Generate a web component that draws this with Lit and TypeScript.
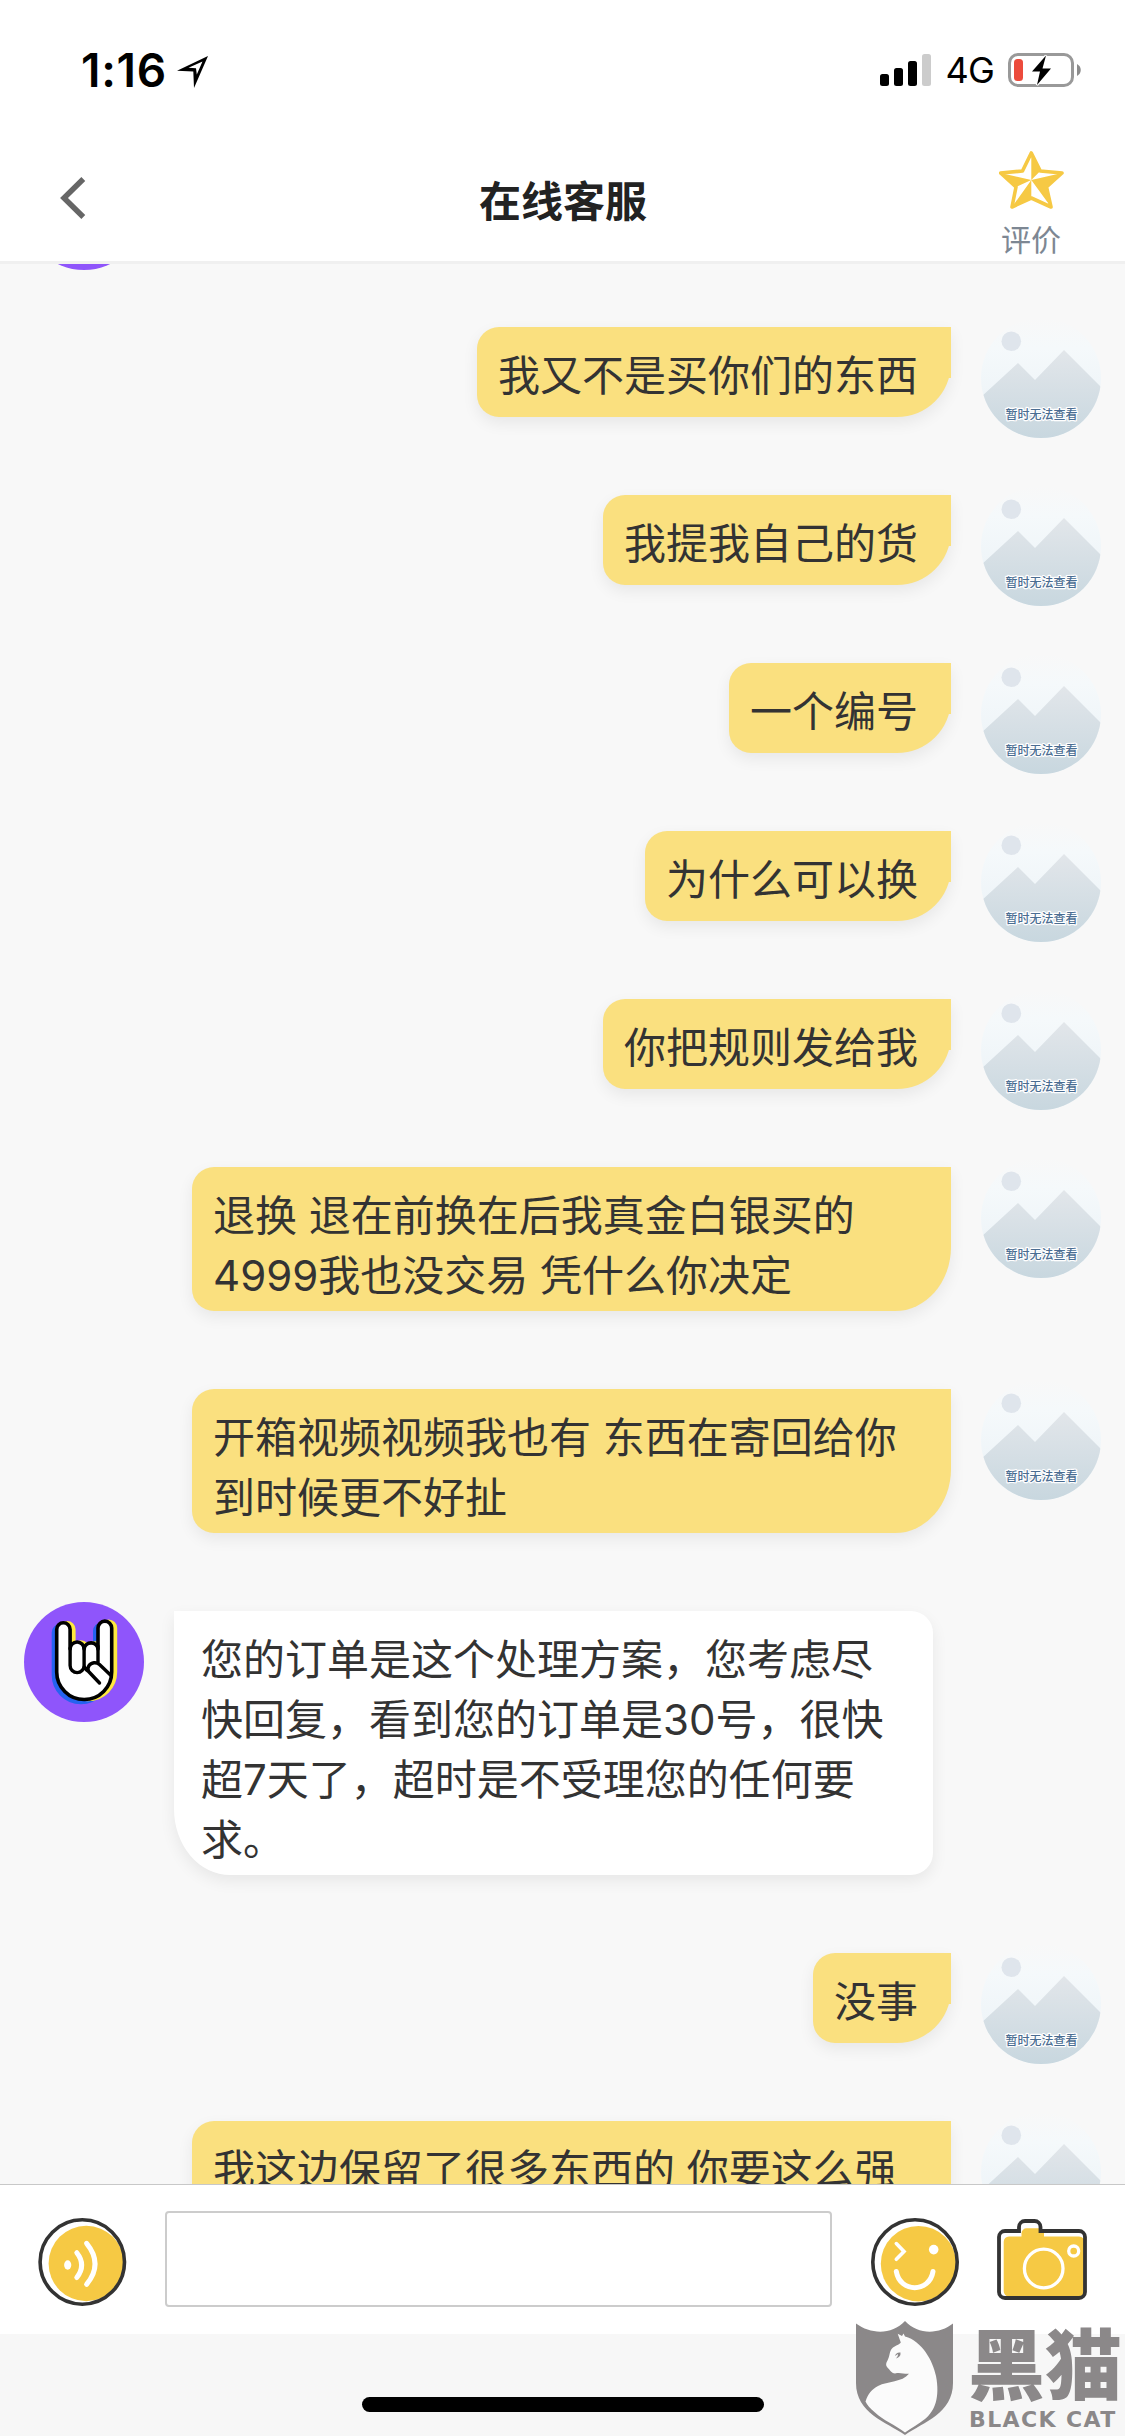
import { LitElement, html, css, svg } from "lit";
import { customElement, property } from "lit/decorators.js";

interface Message {
  side: "me" | "agent";
  lines: string[];
}

const MESSAGES: Message[] = [
  { side: "me", lines: ["我又不是买你们的东西"] },
  { side: "me", lines: ["我提我自己的货"] },
  { side: "me", lines: ["一个编号"] },
  { side: "me", lines: ["为什么可以换"] },
  { side: "me", lines: ["你把规则发给我"] },
  { side: "me", lines: ["退换 退在前换在后我真金白银买的", "4999我也没交易 凭什么你决定"] },
  { side: "me", lines: ["开箱视频视频我也有 东西在寄回给你", "到时候更不好扯"] },
  {
    side: "agent",
    lines: [
      "您的订单是这个处理方案，您考虑尽",
      "快回复，看到您的订单是30号，很快",
      "超7天了，超时是不受理您的任何要",
      "求。",
    ],
  },
  { side: "me", lines: ["没事"] },
  { side: "me", lines: ["我这边保留了很多东西的 你要这么强"] },
];

const HAND =
  "M32.7 70V27.4a6.7 6.7 0 0 1 13.4 0V47a7 7 0 0 1 14 0a7 7 0 0 1 13.9 0V26a6.85 6.85 0 0 1 13.7 0V70a27.5 27.5 0 0 1-55 0Z";

@customElement("chat-avatar")
export class ChatAvatar extends LitElement {
  @property() kind = "me";

  static styles = css`
    :host {
      display: block;
      flex: none;
      width: 120px;
      height: 120px;
    }
    .pic {
      display: block;
      width: 120px;
      height: 120px;
    }
    .caption {
      font: 500 12px "Noto Sans CJK SC", sans-serif;
      fill: #4a6d92;
      stroke: #fff;
      stroke-width: 2.4px;
      stroke-linejoin: round;
      paint-order: stroke;
    }
  `;

  render() {
    if (this.kind === "agent") {
      return html`<svg class="pic" viewBox="0 0 120 120">
        <circle cx="60" cy="60" r="60" fill="#8f55fb" />
        <path d=${HAND} transform="translate(-3.3 3)" fill="#2563f0" stroke="#2563f0" stroke-width="3.4" />
        <path d=${HAND} transform="translate(3.8 0)" fill="#ffe93f" stroke="#ffe93f" stroke-width="3.4" />
        <path d="M70.500 38V28a7 7 0 0 1 3-6V38Z" fill="#2563f0" />
        <path d=${HAND} fill="#fff" stroke="#000" stroke-width="3.6" stroke-linejoin="round" />
        <path
          d="M46.1 46v17.6a7 7 0 0 0 14 0V46M60.1 63c0 3 2 5 4.5 6.500L75.500 81M87 73.500L75.500 62.600a7 7 0 0 0-10.600 1.200c-1.300 2-1 4.200-.300 5.700M74 44v17"
          fill="none"
          stroke="#000"
          stroke-width="3.4"
          stroke-linecap="round"
          stroke-linejoin="round"
        />
      </svg>`;
    }
    return html`<svg class="pic" viewBox="0 0 120 120">
      <defs>
        <linearGradient id="sky" x1="0" y1="0" x2="0" y2="1">
          <stop offset="0" stop-color="#f8f8f8" />
          <stop offset=".25" stop-color="#f5f9fb" />
          <stop offset="1" stop-color="#e9f1f6" />
        </linearGradient>
        <linearGradient id="hill" x1="0" y1="0" x2="0" y2="1">
          <stop offset="0" stop-color="#e2e6ea" />
          <stop offset="1" stop-color="#c8d7df" />
        </linearGradient>
        <clipPath id="round"><circle cx="60" cy="60" r="60" /></clipPath>
      </defs>
      <g clip-path="url(#round)">
        <rect width="120" height="120" fill="url(#sky)" />
        <circle cx="30.300" cy="23.300" r="9.800" fill="#dfe5ec" />
        <path d="M0 79L37 45L54 62L83 32L120 69V120H0Z" fill="url(#hill)" />
      </g>
      <text class="caption" x="24.500" y="100.500">暂时无法查看</text>
    </svg>`;
  }
}

@customElement("chat-message")
export class ChatMessage extends LitElement {
  @property({ attribute: false }) message: Message = MESSAGES[0];

  static styles = css`
    :host {
      display: block;
      flex: none;
    }
    .row {
      display: flex;
      align-items: flex-start;
      gap: 30px;
      padding: 0 24px;
      min-height: 168px;
      box-sizing: border-box;
    }
    .me {
      flex-direction: row-reverse;
    }
    .bubble {
      position: relative;
      box-sizing: border-box;
      min-height: 90px;
      margin: 9px 0 69px;
      padding: 19px 33px 5px 21px;
      font-size: 42px;
      line-height: 60px;
      color: #333;
      background: #fae07f;
      border-radius: 22px 0 54px 22px;
      box-shadow: 0 6px 16px rgba(0, 0, 0, 0.07);
    }
    .line {
      display: block;
      white-space: pre;
      height: 60px;
    }
    .short::after {
      content: "";
      position: absolute;
      top: 0;
      right: 0;
      width: 20px;
      height: 51px;
      background: #fae07f;
    }
    .long {
      width: 759px;
      min-height: 144px;
      border-radius: 22px 0 56px 22px / 22px 0 64px 22px;
    }
    .agent .bubble {
      background: #fff;
      padding: 19px 21px 5px 27px;
      border-radius: 0 22px 22px 56px / 0 22px 22px 66px;
    }
  `;

  render() {
    const { side, lines } = this.message;
    const size = lines[0].length > 12 ? "long" : "short";
    return html`<div class="row ${side}">
      <chat-avatar .kind=${side}></chat-avatar>
      <div class="bubble ${size}">${lines.map((l) => html`<span class="line">${l}</span>`)}</div>
    </div>`;
  }
}

const boltIcon = svg`<path d="M38 2.500L24 18.500H32L29 32L43 15.500H34.500Z" fill="#000" stroke="#fff" stroke-width="2.500" paint-order="stroke"/>`;

@customElement("app-root")
export class AppRoot extends LitElement {
  static styles = css`
    :host {
      position: relative;
      display: flex;
      flex-direction: column;
      width: 1125px;
      height: 2436px;
      overflow: hidden;
      background: #f7f7f7;
      font-family: Inter, "Noto Sans CJK SC", sans-serif;
    }
    svg {
      display: block;
      flex: none;
    }
    .status {
      flex: none;
      display: flex;
      align-items: center;
      height: 132px;
      box-sizing: border-box;
      padding: 8px 43px 0 81px;
      background: #fff;
      color: #000;
    }
    .time {
      width: 96px;
      font-size: 46px;
      font-weight: 600;
      line-height: 54px;
      letter-spacing: 0.7px;
    }
    .arrow {
      margin-top: 4px;
    }
    .bars {
      margin-left: auto;
    }
    .net {
      margin: 0 14px 0 13px;
      font-size: 36px;
      line-height: 44px;
      letter-spacing: -0.8px;
    }
    .header {
      flex: none;
      display: grid;
      grid-template-columns: 200px 1fr 200px;
      align-items: start;
      height: 132px;
      box-sizing: border-box;
      border-bottom: 3px solid #f0f0f0;
      background: #fff;
    }
    .back {
      padding: 44px 0 0 60px;
    }
    .title {
      margin: 0;
      padding: 39px 0 0 1px;
      text-align: center;
      font-size: 42px;
      font-weight: 600;
      line-height: 62px;
      color: #222;
    }
    .rate {
      display: flex;
      flex-direction: column;
      align-items: center;
      padding: 19px 0 0 12px;
      font-size: 30px;
      line-height: 40px;
      color: #7d8793;
    }
    .rate span {
      margin-top: 11px;
    }
    .list {
      flex: 1;
      min-height: 0;
      overflow: hidden;
      display: flex;
      flex-direction: column;
      background: #f8f8f8;
    }
    .earlier {
      flex: none;
      height: 168px;
      margin-top: -114px;
      padding-left: 24px;
    }
    .composer {
      flex: none;
      display: flex;
      align-items: center;
      height: 150px;
      box-sizing: border-box;
      padding: 4px 38px 0;
      border-top: 1px solid #c8c8c8;
      background: #fff;
    }
    .field {
      width: 667px;
      height: 96px;
      box-sizing: border-box;
      margin: -5px 39px 0 38px;
      border: 2px solid #ccc;
      border-radius: 4px;
      background: #fff;
    }
    .camera {
      margin: -4px 0 0 38px;
    }
    .safe {
      flex: none;
      display: flex;
      justify-content: center;
      height: 102px;
      box-sizing: border-box;
      padding-top: 63px;
    }
    .home {
      width: 402px;
      height: 15px;
      border-radius: 8px;
      background: #000;
    }
    .mark {
      position: absolute;
      left: 855px;
      top: 2321px;
      display: flex;
      align-items: flex-start;
      gap: 14px;
      color: #8b8889;
    }
    .words {
      display: flex;
      flex-direction: column;
      white-space: nowrap;
    }
    .cn {
      height: 80px;
      font-family: "Noto Sans CJK SC", sans-serif;
      font-size: 77px;
      font-weight: 900;
      line-height: 80px;
    }
    .en {
      margin-top: 7px;
      padding-left: 1px;
      font-family: "DejaVu Sans", sans-serif;
      font-size: 22px;
      font-weight: 700;
      line-height: 24px;
      letter-spacing: 1.4px;
    }
  `;

  render() {
    return html`
      <div class="status">
        <div class="time">1:16</div>
        <svg class="arrow" width="32" height="33" viewBox="0 0 32 33">
          <path fill-rule="evenodd" d="M31 0L17 32L16.300 15.500L0 14.700ZM25.500 5.500L11.500 11.800L19 12.300L19.800 18.500Z" fill="#000" />
        </svg>
        <svg class="bars" width="52" height="33" viewBox="0 0 52 33">
          <rect x="0" y="20" width="9" height="12" rx="2.500" />
          <rect x="14" y="14" width="9" height="18" rx="2.500" />
          <rect x="28" y="7" width="9" height="25" rx="2.500" />
          <rect x="42" y="0" width="9" height="32" rx="2.500" fill="#ccc" />
        </svg>
        <div class="net">4G</div>
        <svg width="74" height="34" viewBox="0 0 74 34">
          <rect x="1.500" y="1.500" width="63" height="31" rx="8.500" fill="#fff" stroke="#999" stroke-width="3" />
          <path d="M69 11c5 2.500 5 9.500 0 12Z" fill="#8c8c8c" />
          <rect x="6" y="6" width="9" height="22" rx="3.500" fill="#ec4b3c" />
          ${boltIcon}
        </svg>
      </div>

      <div class="header">
        <div class="back">
          <svg width="26" height="44" viewBox="0 0 26 44">
            <path d="M23.300 3L4 22L23.300 41" fill="none" stroke="#666" stroke-width="5.500" />
          </svg>
        </div>
        <h1 class="title">在线客服</h1>
        <div class="rate">
          <svg width="65" height="58" viewBox="0 0 65 58">
            <path
              d="M32.300 2L41.300 20L63 22L47.500 36L52 56L32.300 47L13 56L17 36L1.600 22L23.500 20Z"
              fill="#fff"
              stroke="#f6c944"
              stroke-width="3.600"
              stroke-linejoin="round"
            />
            <path
              d="M32.300 2L41.300 20L32.300 29ZM63 22L47.500 36L32.300 29ZM52 56L47.500 36L32.300 29ZM13 56L32.300 47V29ZM1.600 22L17 36L32.300 29Z"
              fill="#f6c944"
            />
          </svg>
          <span>评价</span>
        </div>
      </div>

      <div class="list">
        <div class="earlier"><chat-avatar kind="agent"></chat-avatar></div>
        ${MESSAGES.map((m) => html`<chat-message .message=${m}></chat-message>`)}
      </div>

      <div class="composer">
        <svg width="89" height="88" viewBox="0 0 89 88">
          <circle cx="48.300" cy="45.500" r="37.700" fill="#f6c944" />
          <circle cx="44.300" cy="44" r="42.200" fill="none" stroke="#333" stroke-width="3.600" />
          <ellipse cx="29.700" cy="47" rx="3.600" ry="4.700" fill="#fff" />
          <path
            d="M38.800 34.700Q48.500 47 38.800 59.500M48.600 25.300Q65.500 46 48.600 66.300"
            fill="none"
            stroke="#fff"
            stroke-width="5"
            stroke-linecap="round"
          />
        </svg>
        <div class="field"></div>
        <svg width="88" height="88" viewBox="0 0 88 88">
          <circle cx="47.500" cy="45.700" r="37.700" fill="#f6c944" />
          <circle cx="44" cy="44" r="42.200" fill="none" stroke="#333" stroke-width="3.600" />
          <path d="M25.300 25.600L33 33.400L25.300 41.300" fill="none" stroke="#fff" stroke-width="3.600" stroke-linecap="round" />
          <circle cx="62.700" cy="31.600" r="4.800" fill="#fff" />
          <path d="M25.300 53.500C29 75 58.500 75 62 53.500" fill="none" stroke="#fff" stroke-width="5" stroke-linecap="round" />
        </svg>
        <svg class="camera" width="90" height="81" viewBox="0 0 90 81">
          <path
            d="M12 17.500H24.500V14a5 5 0 0 1 5-4.700H42a5 5 0 0 1 5 4.700v3.500H82a6 6 0 0 1 6 6V77.500H12a5.300 5.300 0 0 1-5.300-5.300V23a5.300 5.300 0 0 1 5.300-5.500Z"
            fill="#f6c944"
          />
          <path
            d="M8 12H22V8a6 6 0 0 1 6-6h9.500a6 6 0 0 1 6 6v4H82a6 6 0 0 1 6 6V73a6 6 0 0 1-6 6H8a6 6 0 0 1-6-6V18a6 6 0 0 1 6-6Z"
            fill="none"
            stroke="#333"
            stroke-width="3.800"
          />
          <circle cx="46.700" cy="49.500" r="19.300" fill="none" stroke="#fff" stroke-width="3.300" />
          <circle cx="76.700" cy="32" r="5" fill="none" stroke="#fff" stroke-width="3.300" />
        </svg>
      </div>

      <div class="safe"><div class="home"></div></div>

      <div class="mark">
        <svg width="99" height="115" viewBox="-1 0 99 115">
          <path
            d="M0 2.500C15 13.500 36 14 49 0C62 14 83 13.500 97 2.500V62C97 92 68 101 49 114C30 101 0 92 0 62Z"
            fill="#8b8889"
          />
          <path
            d="M41.700 12.700L46 15L47.500 12.500L49 15.500C66 20 77 40 80 55C84 76 79 90 69 98C63 103 55 107 49 111.500C39 104 27 99 19 91.500C14 87 11 84 9.500 80.500C12 73 16 68 22 65C32 60 46 61.500 53 52.800C47 53 44 51 39 52.500C36 52.500 34 49 31 46C29.500 44 30 42 31.500 39.500C34 35 33 31 36 27.500C38.500 24.500 43.500 24 44.800 21.500Z"
            fill="#fbfbfb"
          />
          <path d="M39 35Q40 31 44.500 31.500Q45 36 40 37.500Q42.500 35 42 33Z" fill="#8b8889" />
        </svg>
        <div class="words">
          <div class="cn">黑猫</div>
          <div class="en">BLACK CAT</div>
        </div>
      </div>
    `;
  }
}
